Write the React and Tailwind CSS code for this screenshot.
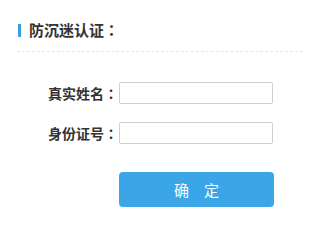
export default function App() {
  const font = { fontFamily: '"Noto Sans CJK SC", "Liberation Sans", sans-serif' };

  return (
    <div className="w-[303px] h-[221px] bg-white overflow-hidden" style={font}>
      {/* Title */}
      <div className="flex items-center pl-[18px] pt-[20px] h-[40px]">
        <span className="w-[3px] h-[13px] bg-[#3c9fd6]"></span>
        <h2 className="ml-[8px] text-[15px] leading-[20px] font-bold text-[#333]">
          防沉迷认证<Colon />
        </h2>
      </div>
      <div className="ml-[17px] mt-[11px] border-t border-dashed border-[#e6e6e6]"></div>

      {/* Form */}
      <div className="mt-[30px] flex flex-col gap-[18px]">
        <FormRow label="真实姓名" />
        <FormRow label="身份证号" />
      </div>

      <div className="mt-[28px] pl-[119px]">
        <button className="w-[155px] h-[35px] rounded-[4px] bg-[#3aa6e8] text-white text-[15px] leading-none">
          确　定
        </button>
      </div>
    </div>
  );
}

// centred full-width colon, as in the reference
function Colon() {
  return (
    <span style={{ fontFamily: '"Noto Sans CJK TC", "Noto Sans CJK SC", sans-serif' }}>：</span>
  );
}

function FormRow({ label }) {
  return (
    <div className="flex items-center">
      <label className="w-[119px] pr-[1px] text-right text-[14px] font-bold text-[#333]">
        {label}<Colon />
      </label>
      <input
        type="text"
        className="w-[154px] h-[22px] border border-[#cfcfcf] rounded-[2px] bg-white outline-none px-1 text-[12px]"
      />
    </div>
  );
}
